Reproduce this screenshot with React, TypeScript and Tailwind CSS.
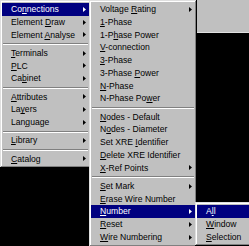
import React from 'react';

type Item = { label?: string; arrow?: boolean; hl?: boolean; sep?: boolean };

const FONT = { fontFamily: '"Liberation Sans", Arial, sans-serif' };

const bevel =
  'bg-[#c0c0c0] shadow-[inset_-1px_-1px_#000,inset_1px_1px_#dfdfdf,inset_-2px_-2px_#808080,inset_2px_2px_#fff]';

const mainMenu: Item[] = [
  { label: 'Co&nnections', arrow: true, hl: true },
  { label: 'Element &Draw', arrow: true },
  { label: 'Element &Analyse', arrow: true },
  { sep: true },
  { label: '&Terminals', arrow: true },
  { label: '&PLC', arrow: true },
  { label: 'Ca&binet', arrow: true },
  { sep: true },
  { label: '&Attributes', arrow: true },
  { label: 'La&yers', arrow: true },
  { label: 'Lan&guage', arrow: true },
  { sep: true },
  { label: '&Library', arrow: true },
  { sep: true },
  { label: '&Catalog', arrow: true },
];

const connMenu: Item[] = [
  { label: 'Voltage &Rating', arrow: true },
  { label: '&1-Phase' },
  { label: '1-P&hase Power' },
  { label: '&V-connection' },
  { label: '&3-Phase' },
  { label: '3-Phase &Power' },
  { label: '&N-Phase' },
  { label: 'N-Phase Po&wer' },
  { sep: true },
  { label: '&Nodes - Default' },
  { label: 'N&odes - Diameter' },
  { label: 'Set XRE &Identifier' },
  { label: '&Delete XRE Identifier' },
  { label: '&X-Ref Points', arrow: true },
  { sep: true },
  { label: '&Set Mark', arrow: true },
  { label: '&Erase Wire Number' },
  { label: '&Number', arrow: true, hl: true },
  { label: '&Reset', arrow: true },
  { label: '&Wire Numbering', arrow: true },
];

const numberMenu: Item[] = [
  { label: 'A&ll', hl: true },
  { label: '&Window' },
  { label: '&Selection' },
];

function Label({ text }: { text: string }) {
  const i = text.indexOf('&');
  if (i < 0) return <span>{text}</span>;
  return (
    <span>
      {text.slice(0, i)}
      <span className="underline underline-offset-[1px]">{text[i + 1]}</span>
      {text.slice(i + 2)}
    </span>
  );
}

function Arrow({ white }: { white?: boolean }) {
  return (
    <svg width="3" height="5" viewBox="0 0 3 5" className="shrink-0">
      <polygon points="0,0 3,2.5 0,5" fill={white ? '#fff' : '#000'} />
    </svg>
  );
}

function Menu({ items, className }: { items: Item[]; className: string }) {
  return (
    <div className={`absolute flex flex-col px-[2px] py-[3px] ${bevel} ${className}`}>
      {items.map((it, idx) =>
        it.sep ? (
          <div key={idx} className="flex h-[5.5px] items-center px-px">
            <div className="h-[2px] w-full border-t border-b border-t-[#808080] border-b-white" />
          </div>
        ) : (
          <div
            key={idx}
            className={`flex h-[12.75px] items-center justify-between pl-[9px] pr-[3px] text-[8.6px] leading-none ${
              it.hl ? 'bg-[#000080] text-white' : 'text-black'
            }`}
          >
            <Label text={it.label || ''} />
            {it.arrow && <Arrow white={it.hl} />}
          </div>
        )
      )}
    </div>
  );
}

export default function App() {
  return (
    <div className="relative h-[246px] w-[249px] overflow-hidden bg-black" style={FONT}>
      <div className="absolute left-[197px] top-0 h-[33px] w-[52px] border-b border-b-[#e0e0e0] bg-[#c0c0c0]" />
      <Menu items={mainMenu} className="left-0 top-0 w-[91px]" />
      <Menu items={connMenu} className="left-[89px] top-0 w-[108px]" />
      <Menu items={numberMenu} className="left-[195px] top-[202px] w-[70px]" />
    </div>
  );
}
